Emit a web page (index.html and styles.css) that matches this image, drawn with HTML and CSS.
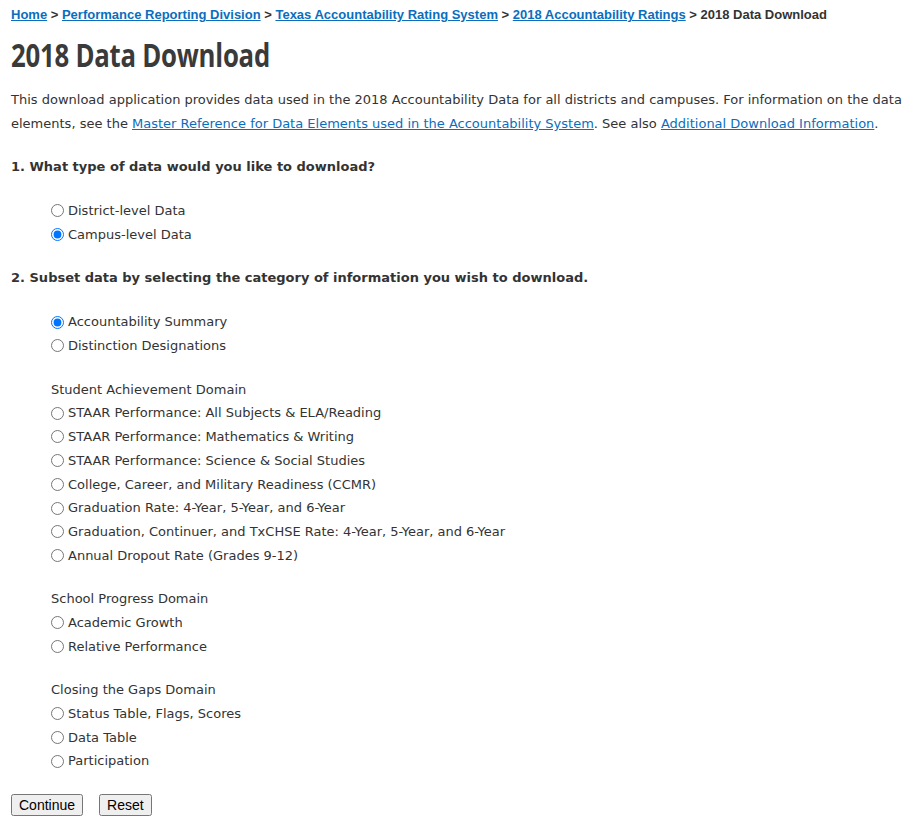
FILE: index.html
```html
<!DOCTYPE html>
<html>
<head>
<meta charset="utf-8">
<link rel="stylesheet" href="styles.css">
<title>2018 Data Download</title>
</head>
<body>
<div class="crumbs"><a href="#">Home</a> &gt; <a href="#">Performance Reporting Division</a> &gt; <a href="#">Texas Accountability Rating System</a> &gt; <a href="#">2018 Accountability Ratings</a> &gt; 2018 Data Download</div>
<h1 class="title"><span class="title-text">2018 Data Download</span></h1>
<p class="intro">This download application provides data used in the 2018 Accountability Data for all districts and campuses. For information on the data elements, see the <a href="#">Master Reference for Data Elements used in the Accountability System</a>. See also <a href="#">Additional Download Information</a>.</p>
<form class="form">
  <div class="question">1. What type of data would you like to download?</div>
  <div class="group">
    <label class="opt"><input type="radio" name="lvl"> District-level Data</label>
    <label class="opt"><input type="radio" name="lvl" checked> Campus-level Data</label>
  </div>
  <div class="question">2. Subset data by selecting the category of information you wish to download.</div>
  <div class="group">
    <label class="opt"><input type="radio" name="cat" checked> Accountability Summary</label>
    <label class="opt"><input type="radio" name="cat"> Distinction Designations</label>
  </div>
  <div class="group">
    <div class="sub">Student Achievement Domain</div>
    <label class="opt"><input type="radio" name="cat"> STAAR Performance: All Subjects &amp; ELA/Reading</label>
    <label class="opt"><input type="radio" name="cat"> STAAR Performance: Mathematics &amp; Writing</label>
    <label class="opt"><input type="radio" name="cat"> STAAR Performance: Science &amp; Social Studies</label>
    <label class="opt"><input type="radio" name="cat"> College, Career, and Military Readiness (CCMR)</label>
    <label class="opt"><input type="radio" name="cat"> Graduation Rate: 4-Year, 5-Year, and 6-Year</label>
    <label class="opt"><input type="radio" name="cat"> Graduation, Continuer, and TxCHSE Rate: 4-Year, 5-Year, and 6-Year</label>
    <label class="opt"><input type="radio" name="cat"> Annual Dropout Rate (Grades 9-12)</label>
  </div>
  <div class="group">
    <div class="sub">School Progress Domain</div>
    <label class="opt"><input type="radio" name="cat"> Academic Growth</label>
    <label class="opt"><input type="radio" name="cat"> Relative Performance</label>
  </div>
  <div class="group">
    <div class="sub">Closing the Gaps Domain</div>
    <label class="opt"><input type="radio" name="cat"> Status Table, Flags, Scores</label>
    <label class="opt"><input type="radio" name="cat"> Data Table</label>
    <label class="opt"><input type="radio" name="cat"> Participation</label>
  </div>
  <div class="buttons">
    <button type="button" class="btn">Continue</button>
    <button type="button" class="btn">Reset</button>
  </div>
</form>
</body>
</html>
```
FILE: styles.css
```css
html, body {
  margin: 0;
  padding: 0;
  background: #fff;
}
body {
  padding: 7px 11px 0 11px;
  color: #333;
  font-family: "DejaVu Sans", Verdana, sans-serif;
  font-size: 13px;
}
a {
  color: #0a6ebd;
  text-decoration: underline;
}
.crumbs {
  font-family: "Liberation Sans", Arial, sans-serif;
  font-weight: bold;
  font-size: 13px;
  line-height: 16px;
  color: #333;
}
.title {
  margin: 11px 0 0 0;
  font-family: "Open Sans", sans-serif;
  font-weight: bold;
  font-size: 32px;
  line-height: 42px;
  color: #3a3a3a;
}
.title-text {
  display: inline-block;
  transform: scaleX(0.805);
  transform-origin: left center;
  letter-spacing: -0.3px;
}
.intro {
  margin: 12px 0 0 0;
  line-height: 24px;
  font-size: 13px;
}
.question {
  font-weight: bold;
  line-height: 24px;
  margin-top: 20px;
}
.question:first-child {
  margin-top: 19px;
}
.group {
  padding-left: 40px;
  margin-top: 20px;
  display: flex;
  flex-direction: column;
}
.opt, .sub {
  display: flex;
  align-items: center;
  height: 23.7px;
  line-height: 23.7px;
}
.opt input {
  margin: 0 4px 0 0;
  width: 13px;
  height: 13px;
}
.buttons {
  margin-top: 21px;
  display: flex;
  gap: 16px;
}
.btn {
  font-family: "Liberation Sans", Arial, sans-serif;
  font-size: 14px;
  padding: 1px 6px;
  height: 22px;
  color: #000;
}
```
